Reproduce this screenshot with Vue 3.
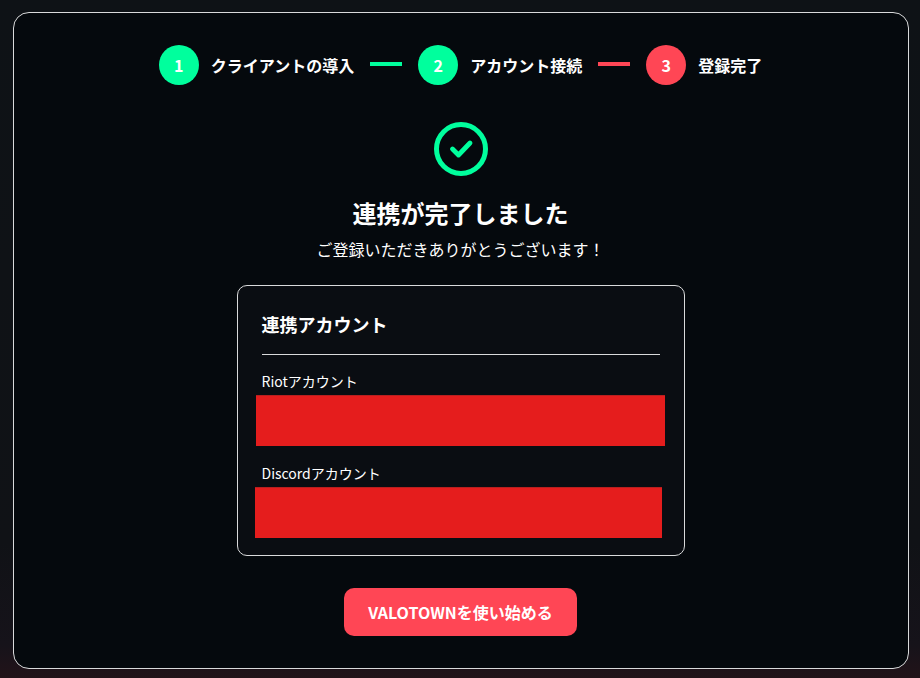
<script setup>
const steps = [
  { no: 1, label: "クライアントの導入", color: "green", line: "green" },
  { no: 2, label: "アカウント接続", color: "green", line: "red" },
  { no: 3, label: "登録完了", color: "red" }
]
</script>

<template>
  <div class="page">
    <main class="panel">
      <div class="steps">
        <template v-for="s in steps" :key="s.no">
          <div class="step">
            <span class="num" :class="s.color">{{ s.no }}</span>
            <span class="step-label">{{ s.label }}</span>
          </div>
          <span v-if="s.line" class="line" :class="s.line"></span>
        </template>
      </div>

      <svg class="check" width="54" height="54" viewBox="0 0 54 54" fill="none">
        <circle cx="27" cy="27" r="24.5" stroke="#00ff9d" stroke-width="5" />
        <path d="M18.5 27l6 6 11.5-12" stroke="#00ff9d" stroke-width="4.8" stroke-linecap="round" stroke-linejoin="round" />
      </svg>

      <h1 class="title">連携が完了しました</h1>
      <p class="sub">ご登録いただきありがとうございます！</p>

      <section class="card">
        <h2 class="card-title">連携アカウント</h2>
        <div class="row">
          <div class="row-label">Riotアカウント</div>
          <div class="mask riot"></div>
        </div>
        <div class="row second">
          <div class="row-label">Discordアカウント</div>
          <div class="mask discord"></div>
        </div>
      </section>

      <button class="start">VALOTOWNを使い始める</button>
    </main>
  </div>
</template>

<style>
html, body {
  margin: 0;
  background: #0d1014;
}
</style>

<style scoped>
.page {
  box-sizing: border-box;
  width: 920px;
  height: 678px;
  padding: 12px 11px 9px 13px;
  background: linear-gradient(180deg, #0e1216 0%, #101216 80%, #16131a 95%, #221319 100%);
  font-family: "Noto Sans CJK JP", "Noto Sans", sans-serif;
  color: #fff;
}

.panel {
  box-sizing: border-box;
  height: 657px;
  padding-top: 32px;
  padding-right: 1px;
  border: 1px solid #d9dadb;
  border-radius: 16px;
  background: #05090d;
  display: flex;
  flex-direction: column;
  align-items: center;
}

.steps {
  display: flex;
  align-items: center;
  gap: 16px;
  height: 40px;
}

.step {
  display: flex;
  align-items: center;
  gap: 12px;
}

.num {
  width: 40px;
  height: 40px;
  border-radius: 50%;
  display: flex;
  align-items: center;
  justify-content: center;
  font-size: 16px;
  font-weight: 700;
}

.step-label {
  font-size: 16px;
  font-weight: 600;
  line-height: 24px;
}

.line {
  width: 32px;
  height: 4px;
  margin-top: -3px;
}

.green { background: #00ff9d; }
.red { background: #ff4655; }

.check {
  margin-top: 37px;
  margin-left: 1px;
  display: block;
}

.title {
  margin: 21px 0 0;
  font-size: 24px;
  font-weight: 700;
  line-height: 32px;
}

.sub {
  margin: 8px 0 0;
  font-size: 16px;
  line-height: 24px;
}

.card {
  box-sizing: border-box;
  width: 448px;
  height: 271px;
  margin-top: 24px;
  padding: 24px;
  border: 1px solid #d9dadb;
  border-radius: 10px;
  background: #0a0d12;
}

.card-title {
  margin: 0 0 16px;
  padding-bottom: 16px;
  border-bottom: 1px solid #d9dadb;
  font-size: 18px;
  font-weight: 700;
  line-height: 28px;
}

.row-label {
  font-size: 14px;
  line-height: 20px;
  margin-bottom: 4px;
}

.second {
  margin-top: 17px;
}

.mask {
  box-sizing: border-box;
  height: 51px;
  border-top: 1px solid #b81f1f;
  background: #e51d1d;
}

.riot {
  width: 409px;
  margin-left: -6px;
}

.discord {
  width: 407px;
  margin-left: -7px;
}

.start {
  width: 233px;
  height: 48px;
  margin-top: 32px;
  border: none;
  border-radius: 10px;
  background: #ff4655;
  color: #fff;
  font-family: inherit;
  font-size: 16px;
  font-weight: 700;
  cursor: pointer;
}
</style>
